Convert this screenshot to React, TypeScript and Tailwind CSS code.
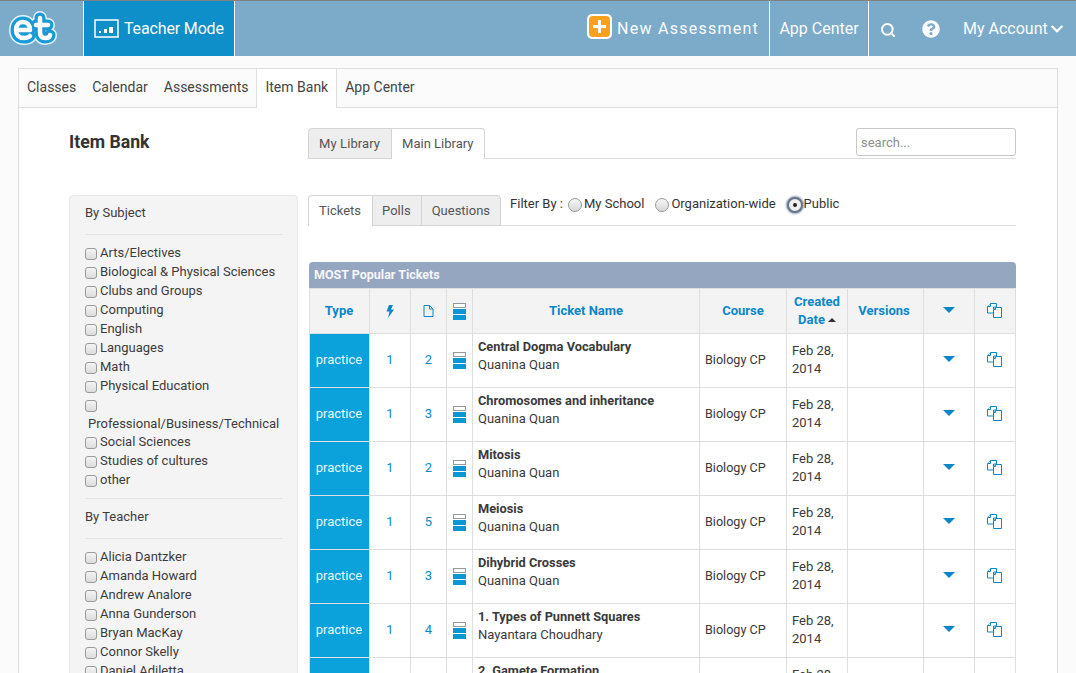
import { FaChevronDown, FaQuestionCircle } from 'react-icons/fa';
import { Search } from 'lucide-react';

const subjects = [
  'Arts/Electives',
  'Biological & Physical Sciences',
  'Clubs and Groups',
  'Computing',
  'English',
  'Languages',
  'Math',
  'Physical Education',
];
const subjectsAfter = ['Social Sciences', 'Studies of cultures', 'other'];
const teachers = [
  'Alicia Dantzker',
  'Amanda Howard',
  'Andrew Analore',
  'Anna Gunderson',
  'Bryan MacKay',
  'Connor Skelly',
  'Daniel Adiletta',
];

const tickets = [
  { name: 'Central Dogma Vocabulary', author: 'Quanina Quan', a: 1, b: 2 },
  { name: 'Chromosomes and inheritance', author: 'Quanina Quan', a: 1, b: 3 },
  { name: 'Mitosis', author: 'Quanina Quan', a: 1, b: 2 },
  { name: 'Meiosis', author: 'Quanina Quan', a: 1, b: 5 },
  { name: 'Dihybrid Crosses', author: 'Quanina Quan', a: 1, b: 3 },
  { name: '1. Types of Punnett Squares', author: 'Nayantara Choudhary', a: 1, b: 4 },
  { name: '2. Gamete Formation', author: 'Nayantara Choudhary', a: 1, b: 4 },
];

function Logo() {
  const e = 'M8 20h13c0-5-3-8-7-8S7 15 7 20s3 8 8 8c3 0 5-1 6-2';
  const t = 'M31 8v14c0 4 2 6 5 6s5-1 5-3M27 15h12';
  return (
    <svg width="48" height="38" viewBox="0 0 48 38" fill="none">
      <g strokeLinecap="round" strokeLinejoin="round">
        <g stroke="#e4f3fa" strokeWidth="14">
          <path d={e} />
          <path d={t} />
        </g>
        <g stroke="#1a9bd7" strokeWidth="11">
          <path d={e} />
          <path d={t} />
        </g>
        <g stroke="#fff" strokeWidth="4.500">
          <path d={e} />
          <path d={t} />
        </g>
      </g>
    </svg>
  );
}

function ChartIcon() {
  return (
    <svg width="25" height="19" viewBox="0 0 25 19">
      <rect x="1" y="1" width="23" height="17" fill="none" stroke="#fff" strokeWidth="1.500" />
      <rect x="5" y="12" width="2" height="2" fill="#fff" />
      <rect x="10" y="10" width="3" height="4" fill="#fff" />
      <rect x="15" y="8" width="4" height="6" fill="#fff" />
    </svg>
  );
}

function StackIcon() {
  return (
    <svg width="13" height="17" viewBox="0 0 13 17" className="mx-auto block">
      <rect x="0.500" y="0.500" width="12" height="4" fill="#fff" stroke="#8f9aa3" />
      <rect x="0" y="6" width="13" height="5" fill="#0b96d4" />
      <rect x="0" y="12" width="13" height="5" fill="#0b96d4" />
    </svg>
  );
}

function BoltIcon() {
  return (
    <svg width="8" height="13" viewBox="0 0 8 13" className="mx-auto block">
      <path d="M3 0h4L5 4.500h3L2 13l1.500-6.500H0.500z" fill="#0b87c9" />
    </svg>
  );
}

function PageIcon() {
  return (
    <svg width="11" height="12" viewBox="0 0 11 12" className="mx-auto block" fill="none" stroke="#0b87c9">
      <path d="M1 .5h5.500L10 4v7.500H1zM6.500 .5V4H10" />
    </svg>
  );
}

function CopyIcon() {
  return (
    <svg width="15" height="15" viewBox="0 0 15 15" className="mx-auto block" fill="#fff" stroke="#0b87c9">
      <path d="M3.500 .5H9.500v3.500H6.500v6H.5V3.500z" />
      <path d="M3.500 .5v3H.5" />
      <path d="M8.500 4.500h6v10h-8V6.500z" />
      <path d="M8.500 4.500v2h-2" />
    </svg>
  );
}

function Caret() {
  return <span className="mx-auto block h-0 w-0 border-x-[6.500px] border-t-[6.500px] border-x-transparent border-t-[#0b87c9]" />;
}

function Check({ label }: { label: string }) {
  return (
    <label className="flex h-[19px] items-center">
      <input
        type="checkbox"
        className="mr-[3px] mt-[2px] h-[12px] w-[12px] shrink-0 appearance-none rounded-[3px] border border-[#9a9a9a] bg-gradient-to-b from-[#f4f4f4] to-[#dcdcdc]"
      />
      <span>{label}</span>
    </label>
  );
}

function Radio({ label, checked, className }: { label: string; checked?: boolean; className: string }) {
  return (
    <label className={`flex items-center ${className}`}>
      {checked ? (
        <span className="mr-px mt-px flex h-[16px] w-[16px] items-center justify-center rounded-full border-[2px] border-[#66778c] bg-[#eeeeee] shadow-[0_0_2px_1px_#8b9bae]">
          <span className="h-[4px] w-[4px] rounded-full bg-[#222]" />
        </span>
      ) : (
        <span className="mr-[2px] mt-[2px] h-[14px] w-[14px] rounded-full border border-[#9a9a9a] bg-gradient-to-b from-[#f6f6f6] to-[#d8d8d8]" />
      )}
      <span>{label}</span>
    </label>
  );
}

function Sidebar() {
  return (
    <aside className="h-[600px] w-[229px] shrink-0 rounded-t-[4px] border border-[#e8e8e8] bg-[#f4f4f4] pl-[15px] pr-[14px] pt-[7px] text-[13px] leading-[19px] text-[#3c3c3c]">
      <div className="h-[31px]">By Subject</div>
      <div className="border-t border-[#e3e3e3] pt-[8px]">
        {subjects.map((s) => (
          <Check key={s} label={s} />
        ))}
        <div className="flex h-[19px] items-center">
          <input
            type="checkbox"
            className="mt-[2px] h-[12px] w-[12px] appearance-none rounded-[3px] border border-[#9a9a9a] bg-gradient-to-b from-[#f4f4f4] to-[#dcdcdc]"
          />
        </div>
        <div className="-mr-[4px] ml-[3px] h-[18px] whitespace-nowrap">Professional/Business/Technical</div>
        {subjectsAfter.map((s) => (
          <Check key={s} label={s} />
        ))}
      </div>
      <div className="mt-[9px] h-[40px] border-t border-[#e3e3e3] pt-[8px]">By Teacher</div>
      <div className="border-t border-[#e3e3e3] pt-[8px]">
        {teachers.map((s) => (
          <Check key={s} label={s} />
        ))}
      </div>
    </aside>
  );
}

function TicketTable() {
  const th = 'border border-[#dedede] bg-[#f3f3f3] p-0 text-center font-bold text-[#0b87c9]';
  const td = 'border border-[#dedede] p-0';
  return (
    <div className="ml-px mt-[36px]">
      <div className="flex h-[26px] items-center rounded-t-[4px] bg-[#95a6c1] pl-[5px] text-[12.500px] font-bold text-[#f5f7fa]">
        MOST Popular Tickets
      </div>
      <table className="w-[706px] table-fixed border-collapse text-[13px]">
        <colgroup>
          <col className="w-[60px]" />
          <col className="w-[41px]" />
          <col className="w-[36px]" />
          <col className="w-[26px]" />
          <col className="w-[227px]" />
          <col className="w-[87px]" />
          <col className="w-[61px]" />
          <col className="w-[76px]" />
          <col className="w-[51px]" />
          <col className="w-[41px]" />
        </colgroup>
        <thead>
          <tr className="h-[45px]">
            <th className={`${th} pr-[1px]`}>Type</th>
            <th className={th}><BoltIcon /></th>
            <th className={th}><PageIcon /></th>
            <th className={th}><StackIcon /></th>
            <th className={th}>Ticket Name</th>
            <th className={th}>Course</th>
            <th className={`${th} leading-[18px]`}>
              Created
              <br />
              Date
              <span className="ml-[3px] inline-block h-0 w-0 -translate-y-[2px] border-x-[4px] border-b-[4px] border-x-transparent border-b-[#333]" />
            </th>
            <th className={`${th} pr-[3px]`}>Versions</th>
            <th className={`${th} pb-[2px]`}><Caret /></th>
            <th className={`${th} pb-[2px] pr-[2px]`}><CopyIcon /></th>
          </tr>
        </thead>
        <tbody className="text-[#3a3a3a]">
          {tickets.map((t) => (
            <tr key={t.name} className="h-[54px]">
              <td className={`${td} bg-[#0ba2dc] pb-[1px] pr-[1px] text-center text-[#e6f5fc]`}>practice</td>
              <td className={`${td} pb-[1px] text-center text-[#0b87c9]`}>{t.a}</td>
              <td className={`${td} pb-[1px] text-center text-[#0b87c9]`}>{t.b}</td>
              <td className={`${td} pb-[1px]`}><StackIcon /></td>
              <td className={`${td} pb-[10px] pl-[5px] leading-[18px]`}>
                <div className="text-[12.800px] font-bold">{t.name}</div>
                <div>{t.author}</div>
              </td>
              <td className={`${td} pb-[1px] pl-[5px] text-[12.600px]`}>Biology CP</td>
              <td className={`${td} pb-[2px] pl-[5px] leading-[18px]`}>
                Feb 28,
                <br />
                2014
              </td>
              <td className={td}></td>
              <td className={`${td} pb-[3px]`}><Caret /></td>
              <td className={`${td} pb-[3px] pr-[2px]`}><CopyIcon /></td>
            </tr>
          ))}
        </tbody>
      </table>
    </div>
  );
}

export default function App() {
  return (
    <div className="h-[673px] overflow-hidden bg-[#fbfbfb] [font-family:Roboto,sans-serif]">
      {/* Top bar */}
      <header className="flex h-[56px] items-stretch border-t border-[#808080] bg-[#7babc9] text-[#fafcfd]">
        <div className="flex w-[84px] items-center border-r border-white pl-[9px]">
          <Logo />
        </div>
        <div className="flex w-[151px] items-center gap-[5px] border-r border-white bg-[#0f8fc9] pl-[10px] text-[16px] tracking-[-0.150px]">
          <ChartIcon />
          <span>Teacher Mode</span>
        </div>
        <div className="ml-auto flex h-full items-center border-r border-white pr-[10px] text-[16px] tracking-[1.250px]">
          <span className="mr-[5px] flex h-[25px] w-[25px] -translate-y-[2px] items-center justify-center rounded-[5px] bg-white">
            <span className="relative h-[21px] w-[21px] rounded-[4px] bg-[#f9a11f]">
              <span className="absolute left-[4px] top-[9px] h-[3px] w-[13px] bg-white" />
              <span className="absolute left-[9px] top-[4px] h-[13px] w-[3px] bg-white" />
            </span>
          </span>
          New Assessment
        </div>
        <div className="flex w-[99px] items-center justify-center border-r border-white text-[16px]">App Center</div>
        <div className="flex w-[207px] items-center text-[16px]">
          <Search className="ml-[11px] mt-[2px] h-[16px] w-[16px]" strokeWidth={3} />
          <FaQuestionCircle className="ml-[26px] h-[18px] w-[18px]" />
          <span className="ml-[23px]">My Account</span>
          <FaChevronDown className="ml-[2px] h-[14px] w-[14px]" />
        </div>
      </header>

      {/* Main panel */}
      <main className="mx-[18px] mt-[12px] h-[700px] w-[1040px] border border-[#dedede] bg-white">
        <nav className="flex h-[39px] border-b border-[#dedede] bg-[#fbfbfb] text-[14px] text-[#444]">
          <span className="flex items-center pb-[2px] pl-[8px]">Classes</span>
          <span className="flex items-center pb-[2px] pl-[16px]">Calendar</span>
          <span className="flex items-center pb-[2px] pl-[16px] pr-[8px]">Assessments</span>
          <span className="-mb-px flex items-center border-x border-[#dedede] bg-white px-[8px] pb-[2px]">Item Bank</span>
          <span className="flex items-center pb-[2px] pl-[8px]">App Center</span>
        </nav>

        <div className="pl-[50px] pr-[41px]">
          <div className="flex h-[87px]">
            <h1 className="w-[239px] shrink-0 pt-[22px] text-[17.700px] font-bold leading-[24px] text-[#333]">Item Bank</h1>
            <div className="flex h-[51px] grow items-end justify-between border-b border-[#dedede]">
              <div className="flex text-[13px] text-[#555]">
                <span className="-mb-px flex h-[31px] items-center rounded-tl-[4px] border border-[#d4d4d4] bg-[#eeeeee] pl-[10px] pr-[11px] tracking-[0.100px]">My Library</span>
                <span className="-mb-px -ml-px flex h-[31px] items-center rounded-tr-[4px] border border-b-0 border-[#d4d4d4] bg-white pl-[10px] pr-[11px]">Main Library</span>
              </div>
              <input
                placeholder="search..."
                className="mb-[2px] h-[28px] w-[160px] rounded-[3px] border border-[#c8c8c8] bg-white px-[4px] text-[13px] text-[#555] placeholder:text-[#8f8f8f]"
              />
            </div>
          </div>

          <div className="flex gap-[10px]">
            <Sidebar />
            <div className="w-[708px]">
              <div className="flex h-[31px] border-b border-[#dedede]">
                <div className="flex text-[13px] text-[#555]">
                  <span className="-mb-px flex h-[31px] items-center rounded-tl-[4px] border border-b-0 border-[#d4d4d4] bg-white pl-[10px] pr-[11px]">Tickets</span>
                  <span className="-mb-px -ml-px flex h-[31px] items-center border border-[#d4d4d4] bg-[#eeeeee] pl-[9px] pr-[10px]">Polls</span>
                  <span className="-mb-px -ml-px flex h-[31px] items-center rounded-tr-[4px] border border-[#d4d4d4] bg-[#eeeeee] px-[10px]">Questions</span>
                </div>
                <div className="ml-[9px] flex h-[18px] items-center text-[13px] text-[#333]">
                  <span>Filter By :</span>
                  <Radio label="My School" className="ml-[5px]" />
                  <Radio label="Organization-wide" className="ml-[11px]" />
                  <Radio label="Public" checked className="ml-[11px]" />
                </div>
              </div>
              <TicketTable />
            </div>
          </div>
        </div>
      </main>
    </div>
  );
}
